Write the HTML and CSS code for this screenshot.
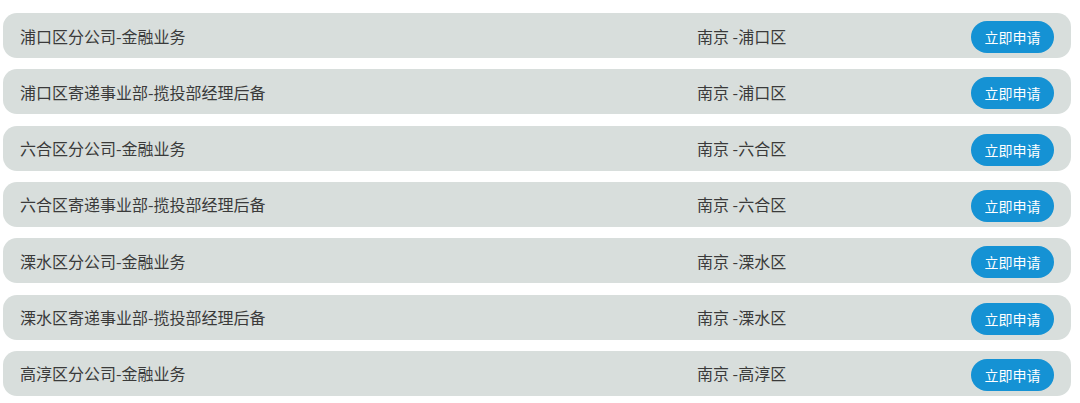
FILE: index.html
```html
<!DOCTYPE html>
<html lang="zh-CN">
<head>
<meta charset="utf-8">
<title>职位列表</title>
<link rel="stylesheet" href="styles.css">
</head>
<body>
<ul class="job-list">
  <li class="job-row"><span class="job-title">浦口区分公司-金融业务</span><span class="job-loc">南京 -浦口区</span><a class="apply-btn" href="#">立即申请</a></li>
  <li class="job-row"><span class="job-title">浦口区寄递事业部-揽投部经理后备</span><span class="job-loc">南京 -浦口区</span><a class="apply-btn" href="#">立即申请</a></li>
  <li class="job-row"><span class="job-title">六合区分公司-金融业务</span><span class="job-loc">南京 -六合区</span><a class="apply-btn" href="#">立即申请</a></li>
  <li class="job-row"><span class="job-title">六合区寄递事业部-揽投部经理后备</span><span class="job-loc">南京 -六合区</span><a class="apply-btn" href="#">立即申请</a></li>
  <li class="job-row"><span class="job-title">溧水区分公司-金融业务</span><span class="job-loc">南京 -溧水区</span><a class="apply-btn" href="#">立即申请</a></li>
  <li class="job-row"><span class="job-title">溧水区寄递事业部-揽投部经理后备</span><span class="job-loc">南京 -溧水区</span><a class="apply-btn" href="#">立即申请</a></li>
  <li class="job-row"><span class="job-title">高淳区分公司-金融业务</span><span class="job-loc">南京 -高淳区</span><a class="apply-btn" href="#">立即申请</a></li>
</ul>
</body>
</html>
```

FILE: styles.css
```css
html, body {
  margin: 0;
  padding: 0;
  background: #ffffff;
}
body {
  font-family: "Microsoft YaHei", "Noto Sans CJK SC", "Noto Sans", sans-serif;
  color: #3a3a3a;
}
.job-list {
  list-style: none;
  margin: 0;
  padding: 13px 9px 0 3px;
  display: flex;
  flex-direction: column;
  gap: 11.33px;
}
.job-row {
  height: 45px;
  box-sizing: border-box;
  background: #d8dedc;
  border-radius: 14px;
  display: grid;
  grid-template-columns: 1fr 274px 83px;
  align-items: center;
  padding: 0 17px 0 17px;
  font-size: 16px;
}
.job-title, .job-loc {
  white-space: nowrap;
  line-height: 20px;
}
.apply-btn {
  display: flex;
  align-items: center;
  justify-content: center;
  height: 32px;
  border-radius: 16px;
  background: #1592d4;
  color: #ffffff;
  font-size: 14px;
  text-decoration: none;
  margin-top: 3px;
}
```
